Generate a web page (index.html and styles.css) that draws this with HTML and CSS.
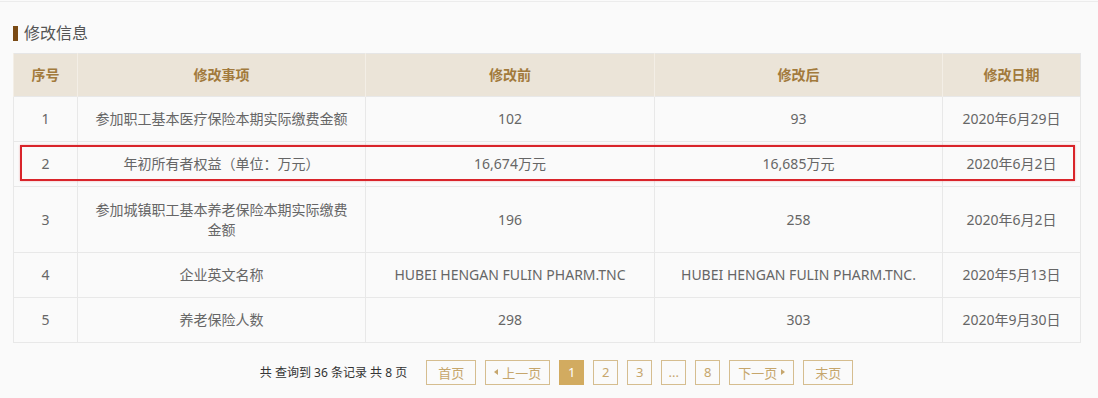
FILE: index.html
```html
<!DOCTYPE html>
<html lang="zh-CN">
<head>
<meta charset="utf-8">
<link rel="stylesheet" href="styles.css">
</head>
<body>
<div class="page">
  <h2 class="title"><span class="mark"></span>修改信息</h2>
  <div class="table-wrap">
    <table class="changes">
      <colgroup>
        <col class="c-no"><col class="c-item"><col class="c-before"><col class="c-after"><col class="c-date">
      </colgroup>
      <thead>
        <tr><th>序号</th><th>修改事项</th><th>修改前</th><th>修改后</th><th>修改日期</th></tr>
      </thead>
      <tbody>
        <tr><td>1</td><td>参加职工基本医疗保险本期实际缴费金额</td><td>102</td><td>93</td><td>2020年6月29日</td></tr>
        <tr><td>2</td><td>年初所有者权益（单位：万元）</td><td>16,674万元</td><td>16,685万元</td><td>2020年6月2日</td></tr>
        <tr class="tall"><td>3</td><td><span class="wrap">参加城镇职工基本养老保险本期实际缴费金额</span></td><td>196</td><td>258</td><td>2020年6月2日</td></tr>
        <tr><td>4</td><td>企业英文名称</td><td>HUBEI HENGAN FULIN PHARM.TNC</td><td>HUBEI HENGAN FULIN PHARM.TNC.</td><td>2020年5月13日</td></tr>
        <tr><td>5</td><td>养老保险人数</td><td>298</td><td>303</td><td>2020年9月30日</td></tr>
      </tbody>
    </table>
    <div class="highlight"></div>
  </div>
  <div class="pager">
    <span class="summary">共 查询到 36 条记录 共 8 页</span>
    <a class="btn w50">首页</a>
    <a class="btn w65"><span class="tri left"></span>上一页</a>
    <a class="btn num active">1</a>
    <a class="btn num">2</a>
    <a class="btn num">3</a>
    <a class="btn num">...</a>
    <a class="btn num">8</a>
    <a class="btn w65">下一页<span class="tri right"></span></a>
    <a class="btn w50">末页</a>
  </div>
</div>
</body>
</html>
```

FILE: styles.css
```css
html, body {
  margin: 0;
  padding: 0;
  background: #fafafa;
}
body {
  font-family: "Noto Sans", "Noto Sans CJK SC", sans-serif;
  color: #666;
}
.page {
  border-top: 1px solid #ececec;
  margin-top: 1px;
  padding: 0 18px 0 13px;
}
.title {
  margin: 0 0 10px;
  padding-top: 21px;
  height: 20px;
  display: flex;
  align-items: center;
  font-size: 16px;
  font-weight: normal;
  color: #555;
  line-height: 20px;
}
.mark {
  display: inline-block;
  width: 5px;
  height: 15px;
  background: #7a4a14;
  margin-right: 6px;
}
.table-wrap {
  position: relative;
  width: 1067px;
}
.changes {
  width: 1067px;
  border-collapse: collapse;
  table-layout: fixed;
  font-size: 14px;
  border: 1px solid #e6e6e6;
}
.c-no { width: 64px; }
.c-item { width: 288px; }
.c-before { width: 289px; }
.c-after { width: 288px; }
.c-date { width: 138px; }
.changes th {
  background: #ebe4d8;
  color: #a27a3c;
  font-weight: bold;
  height: 42px;
  padding: 0;
  line-height: 20px;
  border-left: 1px solid #f3eee6;
}
.changes td {
  height: 44px;
  padding: 0 10px;
  text-align: center;
  line-height: 20px;
  border: 1px solid #e8e8e8;
  color: #666;
}
.changes tr.tall td { height: 65px; }
.changes .wrap {
  display: inline-block;
  width: 252px;
}
.highlight {
  position: absolute;
  left: 7px;
  top: 92px;
  width: 1051px;
  height: 32px;
  border: 2px solid #d9242a;
  box-shadow: 0 0 2px rgba(217, 36, 42, 0.35);
  pointer-events: none;
}
.pager {
  display: flex;
  align-items: center;
  justify-content: center;
  gap: 9px;
  margin-top: 16px;
  padding-left: 20px;
  height: 26px;
}
.summary {
  font-size: 12px;
  color: #333;
  margin-right: 10px;
}
.btn {
  box-sizing: border-box;
  height: 25px;
  border: 1px solid #d5bd8f;
  color: #c6a66c;
  font-size: 13px;
  display: flex;
  align-items: center;
  justify-content: center;
  gap: 4px;
  background: #fafafa;
}
.w50 { width: 50px; }
.w65 { width: 65px; }
.num { width: 25px; }
.btn.active {
  background: #d2ab60;
  border-color: #d2ab60;
  color: #fff;
}
.tri {
  width: 0;
  height: 0;
  border-top: 3px solid transparent;
  border-bottom: 3px solid transparent;
}
.tri.left { border-right: 4px solid #c6a66c; }
.tri.right { border-left: 4px solid #c6a66c; }
```
